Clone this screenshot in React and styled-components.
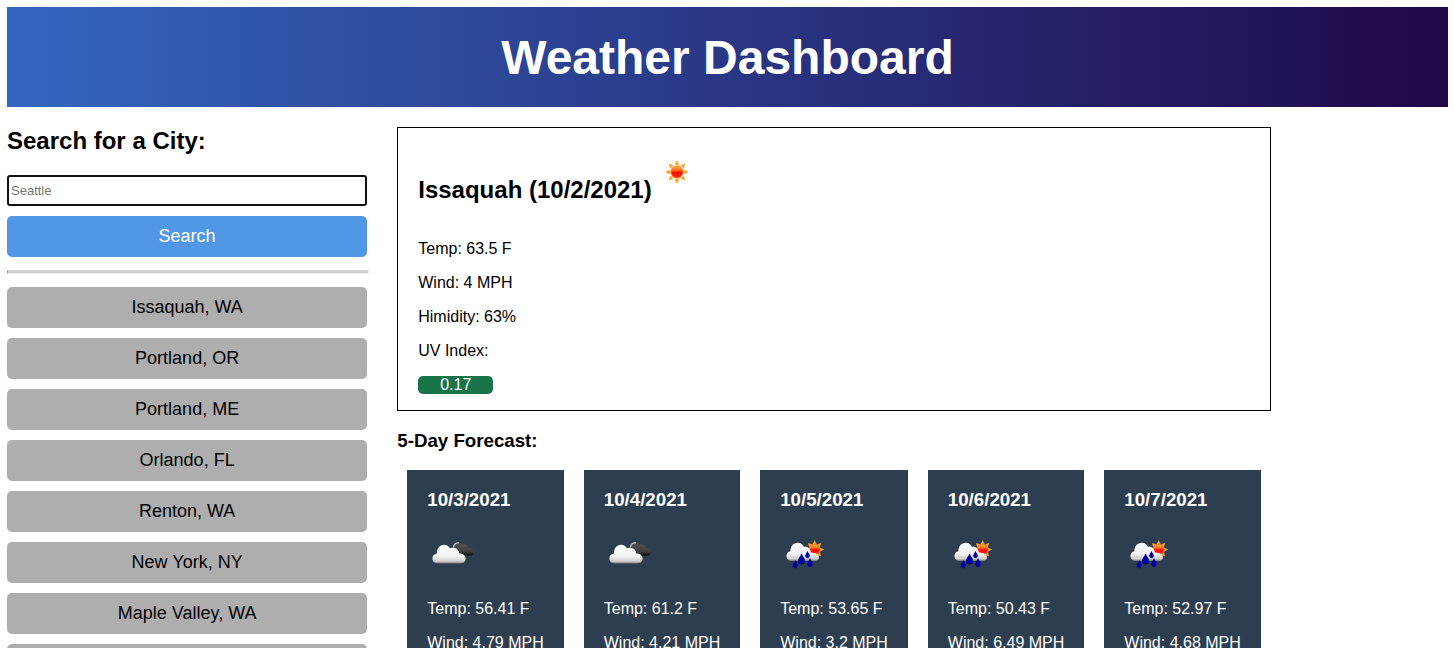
import React from "react";
import styled, { createGlobalStyle } from "styled-components";

const GlobalStyle = createGlobalStyle`
  body {
    margin: 7px 6px 7px 7px;
    font-family: "Liberation Sans", Arial, Helvetica, sans-serif;
    font-size: 16px;
    color: #000;
    background: #fff;
  }
`;

const Header = styled.header`
  padding: 23px 0 22px;
  background: linear-gradient(to right, #3366bf, #200849);
  color: #fff;
  text-align: center;
`;

const PageTitle = styled.h1`
  margin: 0;
  font-size: 48px;
  line-height: 55px;
`;

const Layout = styled.div`
  display: flex;
  align-items: flex-start;
  gap: 30px;
  padding-top: 20px;
`;

const Sidebar = styled.aside`
  flex: 0 0 25%;
  min-width: 0;
`;

const SearchForm = styled.form`
  display: flex;
  flex-direction: column;
  gap: 10px;
`;

const SearchLabel = styled.label`
  margin-bottom: 11px;
  font-size: 24px;
  font-weight: bold;
  line-height: 27px;
`;

const SearchInput = styled.input`
  box-sizing: border-box;
  width: 100%;
  height: 31px;
  padding: 1px 2px;
  border: 2px solid #101010;
  border-radius: 3px;
  outline: none;
  font-family: inherit;
  font-size: 13px;
  &::placeholder {
    color: #757575;
  }
`;

const Button = styled.button`
  width: 100%;
  padding: 10px;
  border: 0;
  border-radius: 5px;
  background: ${(p) => (p.$primary ? "#5097e6" : "#aeaeae")};
  color: ${(p) => (p.$primary ? "#fff" : "#000")};
  font-family: inherit;
  font-size: 18px;
  line-height: 21px;
  cursor: pointer;
`;

const Divider = styled.hr`
  width: 100%;
  height: 2px;
  margin: 13px 0;
  border: 1px solid;
  border-color: #d0d0d0 #ececec #ececec #9a9a9a;
  background: #d0d0d0;
`;

const History = styled.div`
  display: flex;
  flex-direction: column;
  gap: 10px;
`;

const Main = styled.main`
  flex: none;
`;

const Current = styled.section`
  padding: 0 20px;
  border: 1px solid #000;
`;

const CurrentHead = styled.div`
  display: flex;
  align-items: flex-start;
  padding-top: 20px;
`;

const CityName = styled.h2`
  margin: 28px 0 21px;
  font-size: 24px;
  line-height: 27px;
`;

const Stat = styled.p`
  margin: 16px 0;
  line-height: 18px;
`;

const UvBadge = styled(Stat)`
  width: 75px;
  border-radius: 5px;
  background: #1a744a;
  color: #fff;
  text-align: center;
`;

const SectionTitle = styled.h3`
  margin: 19px 0;
  line-height: 21px;
`;

const Forecast = styled.div`
  display: flex;
  gap: 20px;
  padding: 0 10px;
`;

const DayCard = styled.article`
  padding: 0 20px;
  background: #2d3e50;
  color: #fff;
`;

const DayIcon = styled.div`
  padding-bottom: 5px;
  line-height: 0;
`;

const Rays = ({ cx, cy, outer, inner, half }) => (
  <g fill="#fca01e">
    {[0, 45, 90, 135, 180, 225, 270, 315].map((angle) => (
      <polygon
        key={angle}
        points={`${cx},${cy - outer} ${cx + half},${cy - inner} ${cx - half},${cy - inner}`}
        transform={`rotate(${angle} ${cx} ${cy})`}
      />
    ))}
  </g>
);

const Defs = ({ id }) => (
  <defs>
    <linearGradient id={`${id}-sun`} x1="0" y1="0" x2="0" y2="1">
      <stop offset="0" stopColor="#ffb050" />
      <stop offset="0.35" stopColor="#ff6a20" />
      <stop offset="0.55" stopColor="#f80c08" />
      <stop offset="1" stopColor="#ff2a0a" />
    </linearGradient>
    <linearGradient id={`${id}-cloud`} x1="0" y1="0" x2="0" y2="1">
      <stop offset="0" stopColor="#fff" />
      <stop offset="0.6" stopColor="#f4f4f4" />
      <stop offset="0.88" stopColor="#cfcfcf" />
      <stop offset="1" stopColor="#777" />
    </linearGradient>
    <linearGradient id={`${id}-dark`} x1="0" y1="0" x2="0" y2="1">
      <stop offset="0" stopColor="#555" />
      <stop offset="0.7" stopColor="#3c3c3c" />
      <stop offset="1" stopColor="#050505" />
    </linearGradient>
  </defs>
);

const SunIcon = ({ id }) => (
  <svg width="50" height="50" viewBox="0 0 50 50" role="img" aria-label="Clear sky">
    <Defs id={id} />
    <Rays cx={25} cy={24} outer={11.6} inner={7.2} half={2.4} />
    <circle cx="25" cy="24" r="6.2" fill={`url(#${id}-sun)`} stroke="#f98a1c" strokeWidth="0.8" />
  </svg>
);

const CloudsIcon = ({ id }) => (
  <svg width="50" height="50" viewBox="-1 0 50 50" role="img" aria-label="Broken clouds">
    <Defs id={id} />
    <path
      d="M25 27V18.5C25 15.5 27.2 13.6 30 13.6C32.2 13.6 33.6 14.8 34.4 15.6C37 14.6 39.8 15.8 40.4 18.6C43.8 18.8 45.8 20.6 45.8 23C45.8 25.4 44 26.8 41.4 26.8Z"
      fill={`url(#${id}-dark)`}
    />
    <path d="M25.4 18.4C25.8 15.4 28 13.5 31 13.9" fill="none" stroke="#c8c8c8" strokeWidth="1.3" />
    <path
      d="M9.4 34.5C6.2 34.5 4.4 32.4 4.4 29.6C4.4 26.7 6.4 24.8 9 24.5C8.8 19.4 11.8 15.8 16 15.8C18.8 15.8 20.8 17.2 21.8 19.3C26.2 17.6 31 19.8 31.2 24.4C35 24.2 37.6 26.4 37.6 29.6C37.6 32.6 35.6 34.5 32.4 34.5Z"
      fill={`url(#${id}-cloud)`}
    />
  </svg>
);

const Drop = ({ x, y, s }) => (
  <path
    transform={`translate(${x} ${y}) scale(${s})`}
    d="M0 -5C.8 -2.6 3.2 -.6 3.2 1.9A3.2 3.2 0 0 1 -3.2 1.9C-3.2 -.6 -.8 -2.6 0 -5Z"
    fill="#0000b0"
    stroke="#000070"
    strokeWidth="0.6"
  />
);

const RainIcon = ({ id }) => (
  <svg width="50" height="50" viewBox="0 0 50 50" role="img" aria-label="Rain">
    <Defs id={id} />
    <Rays cx={34.6} cy={20.6} outer={9.4} inner={5.4} half={2.1} />
    <circle cx="34.6" cy="20.6" r="5.3" fill={`url(#${id}-sun)`} stroke="#f98a1c" strokeWidth="0.8" />
    <path
      d="M11.6 32C8.6 32 6.4 29.8 6.4 27C6.4 24.5 8.2 22.6 10.4 22.2C10.4 17.2 13.4 13.7 17.6 13.7C20.8 13.7 23 15.5 24 18C27.4 17 30.8 19.4 30.8 23.6C32 23.2 33 23.4 33.8 24C36.8 24 39 25.6 39 28.2C39 30.6 37.2 32 34.6 32Z"
      fill={`url(#${id}-cloud)`}
    />
    <Drop x={15.3} y={35.2} s={0.75} />
    <Drop x={21.6} y={30} s={1} />
    <Drop x={27.5} y={25.6} s={0.65} />
    <Drop x={30} y={33.6} s={0.8} />
  </svg>
);

const icons = { clouds: CloudsIcon, rain: RainIcon };

const cities = [
  "Issaquah, WA",
  "Portland, OR",
  "Portland, ME",
  "Orlando, FL",
  "Renton, WA",
  "New York, NY",
  "Maple Valley, WA",
  "Seattle, WA",
];

const days = [
  { date: "10/3/2021", icon: "clouds", temp: "56.41", wind: "4.79" },
  { date: "10/4/2021", icon: "clouds", temp: "61.2", wind: "4.21" },
  { date: "10/5/2021", icon: "rain", temp: "53.65", wind: "3.2" },
  { date: "10/6/2021", icon: "rain", temp: "50.43", wind: "6.49" },
  { date: "10/7/2021", icon: "rain", temp: "52.97", wind: "4.68" },
];

export default function App() {
  return (
    <>
      <GlobalStyle />
      <Header>
        <PageTitle>Weather Dashboard</PageTitle>
      </Header>
      <Layout>
        <Sidebar>
          <SearchForm onSubmit={(e) => e.preventDefault()}>
            <SearchLabel htmlFor="city">Search for a City:</SearchLabel>
            <SearchInput id="city" type="text" placeholder="Seattle" />
            <Button type="submit" $primary>
              Search
            </Button>
          </SearchForm>
          <Divider />
          <History>
            {cities.map((city) => (
              <Button type="button" key={city}>
                {city}
              </Button>
            ))}
          </History>
        </Sidebar>
        <Main>
          <Current>
            <CurrentHead>
              <CityName>Issaquah (10/2/2021)</CityName>
              <SunIcon id="now" />
            </CurrentHead>
            <Stat>Temp: 63.5 F</Stat>
            <Stat>Wind: 4 MPH</Stat>
            <Stat>Himidity: 63%</Stat>
            <Stat>UV Index:</Stat>
            <UvBadge>0.17</UvBadge>
          </Current>
          <SectionTitle>5-Day Forecast:</SectionTitle>
          <Forecast>
            {days.map(({ date, icon, temp, wind }, i) => {
              const Icon = icons[icon];
              return (
                <DayCard key={date}>
                  <SectionTitle>{date}</SectionTitle>
                  <DayIcon>
                    <Icon id={`day${i}`} />
                  </DayIcon>
                  <Stat>Temp: {temp} F</Stat>
                  <Stat>Wind: {wind} MPH</Stat>
                </DayCard>
              );
            })}
          </Forecast>
        </Main>
      </Layout>
    </>
  );
}
